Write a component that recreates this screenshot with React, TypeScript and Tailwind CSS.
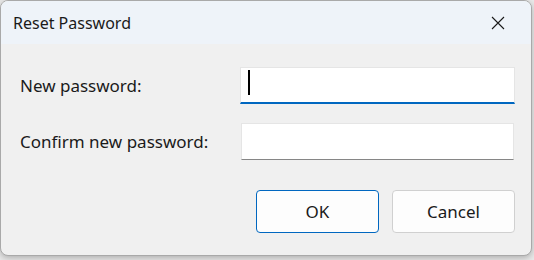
export default function App() {
    return (
        <div className="w-[534px] h-[260px] bg-[#e9e9e9] overflow-hidden" style={{ fontFamily: '"Noto Sans", "Liberation Sans", sans-serif' }}>
            <div className="w-[532px] h-[256px] rounded-[8px] border border-[#a9a9a9] bg-[#f0f0f0] overflow-hidden shadow-[0_2px_6px_rgba(0,0,0,0.25)] flex flex-col">
                {/* Title bar */}
                <div className="h-[43px] shrink-0 bg-[#eef3f9] flex items-center justify-between pl-[12px] pr-[26px]">
                    <span className="text-[16px] text-[#1a1a1a] leading-none">Reset Password</span>
                    <svg width="14" height="14" viewBox="0 0 14 14" className="text-[#1a1a1a]">
                        <path d="M1 1 L13 13 M13 1 L1 13" stroke="currentColor" strokeWidth="1.1" fill="none" />
                    </svg>
                </div>

                {/* Body */}
                <div className="flex-1 pl-[19px] pr-[16px] pt-[23px]">
                    <div className="flex items-center h-[37px]">
                        <span className="w-[220px] text-[17px] text-[#1a1a1a]">New password:</span>
                        <div className="relative w-[275px] h-[37px] bg-white border border-[#e5e5e5] border-b-2 border-b-[#0067c0]">
                            <div className="absolute left-[7px] top-[2px] w-[2px] h-[25px] bg-black" />
                        </div>
                    </div>
                    <div className="flex items-center h-[37px] mt-[19px]">
                        <span className="w-[221px] text-[17px] text-[#1a1a1a]">Confirm new password:</span>
                        <div className="w-[273px] h-[37px] bg-white border border-[#e5e5e5] border-b-[#868686]" />
                    </div>
                    <div className="flex justify-end gap-[13px] mt-[30px]">
                        <button className="w-[123px] h-[43px] rounded-[4px] bg-[#fdfdfd] border border-[#0067c0] text-[17px] text-[#1a1a1a]">OK</button>
                        <button className="w-[123px] h-[43px] rounded-[4px] bg-[#fdfdfd] border border-[#d0d0d0] text-[17px] text-[#1a1a1a]">Cancel</button>
                    </div>
                </div>
            </div>
        </div>
    );
}
